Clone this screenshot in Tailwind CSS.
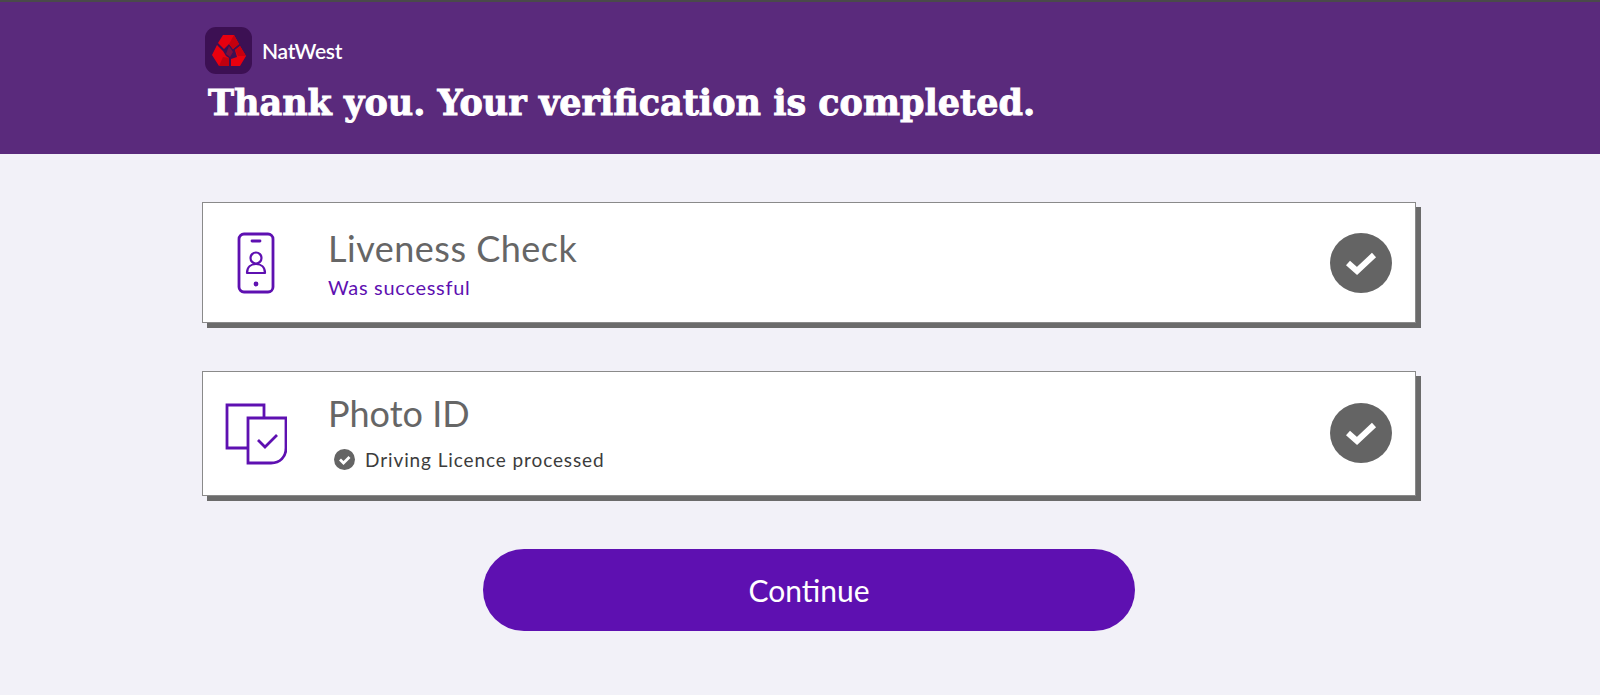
<!DOCTYPE html>
<html lang="en">
  <head>
    <meta charset="UTF-8">
    <meta name="viewport" content="width=device-width, initial-scale=1.0">
    <title>NatWest - Verification completed</title>
    <script src="https://cdn.jsdelivr.net/npm/@tailwindcss/browser@4"></script>
  </head>
  <body class="h-[695px] overflow-hidden bg-[#f2f1f8] font-['Lato','Open_Sans',sans-serif]">

    <header class="h-[154px] bg-[#5a2a7c] border-t-2 border-[#4a4a4a] pl-[205px] pt-[25px]">
      <div class="flex items-center">
        <div class="w-[47px] h-[47px] rounded-[11px] bg-[#3c1053] flex items-center justify-center">
          <svg class="w-[34px] h-[32px]" viewBox="0 0 34 32">
            <polygon points="11,0 22,0 27,9 21,14 17,9 12,14 6,8" fill="#e8000f"/>
            <polygon points="22,0 27,9 21,14 17,9" fill="#c4000f"/>
            <polygon points="5,10 11,16 14,21 17,23 17,31 7,31 0,20" fill="#e8000f"/>
            <polygon points="7,31 17,31 17,23 11,22" fill="#c00010"/>
            <polygon points="23,15 28,11 34,21 28,31 19,31 19,24 25,22" fill="#e8000f"/>
            <polygon points="23,15 28,11 34,21 26,21" fill="#c8000f"/>
            <polygon points="17,11 21,17 18,22 14,19" fill="#7a1040"/>
          </svg>
        </div>
        <span class="ml-[10px] text-[21px] leading-none font-semibold text-white tracking-[-0.3px]">NatWest</span>
      </div>
      <h1 class="ml-[3px] mt-[7px] font-['DejaVu_Serif',serif] font-bold text-[35px] leading-[44px] text-white whitespace-nowrap [-webkit-text-stroke:0.9px_white]">Thank you. Your verification is completed.</h1>
    </header>

    <main class="pl-[202px] pt-[48px]">
      <section class="w-[1214px] h-[121px] bg-white border border-[#8a8a8a] shadow-[5px_5px_0_#6b6b6b] flex items-center">
        <div class="w-[125px] pr-[20px] flex justify-center">
          <svg class="w-[38px] h-[62px] text-[#5e10b1]" viewBox="0 0 38 62" fill="none" stroke="currentColor" stroke-width="2.8">
            <rect x="2" y="2" width="34" height="58" rx="5"/>
            <path d="M15 9h8" stroke-linecap="round"/>
            <circle cx="19" cy="26" r="5.5" stroke-width="2.2"/>
            <path d="M10 41c0-6 4-9 9-9s9 3 9 9z" stroke-linejoin="round" stroke-width="2.2"/>
            <circle cx="19" cy="52" r="1" fill="currentColor"/>
          </svg>
        </div>
        <div class="flex-1">
          <h2 class="text-[36px] leading-[44px] text-[#666666] tracking-[0.5px]">Liveness Check</h2>
          <p class="mt-[4px] text-[20px] leading-[26px] text-[#5e10b1] tracking-[0.7px]">Was successful</p>
        </div>
        <svg class="w-[62px] h-[60px] mr-[23px]" viewBox="0 0 62 60">
          <ellipse cx="31" cy="30" rx="31" ry="30" fill="#646464"/>
          <path d="M18 30l9 8 17-16" fill="none" stroke="#fff" stroke-width="6"/>
        </svg>
      </section>

      <section class="mt-[48px] w-[1214px] h-[125px] bg-white border border-[#8a8a8a] shadow-[5px_5px_0_#6b6b6b] flex items-center">
        <div class="w-[125px] pr-[20px] flex justify-center">
          <svg class="w-[62px] h-[62px] text-[#5e10b1]" viewBox="0 0 62 62" fill="none" stroke="currentColor" stroke-width="2.8">
            <path d="M23 45H2V2h37v14"/>
            <path d="M23 15h38v30c0 9-6 15-15 15H23z"/>
            <path d="M33 37l7 7 12-12"/>
          </svg>
        </div>
        <div class="flex-1 pb-[2px]">
          <h2 class="text-[36px] leading-[44px] text-[#666666] -mt-[2px]">Photo ID</h2>
          <p class="mt-[12px] ml-[6px] flex items-center gap-[10px] text-[19px] leading-[26px] text-[#3c3c3c] tracking-[0.9px]">
            <svg class="w-[21px] h-[21px]" viewBox="0 0 21 21">
              <circle cx="10.5" cy="10.5" r="10.5" fill="#646464"/>
              <path d="M6 10.5l3.5 3.5 6-6" fill="none" stroke="#fff" stroke-width="2.8"/>
            </svg>
            Driving Licence processed
          </p>
        </div>
        <svg class="w-[62px] h-[60px] mr-[23px] mb-[2px]" viewBox="0 0 62 60">
          <ellipse cx="31" cy="30" rx="31" ry="30" fill="#646464"/>
          <path d="M18 30l9 8 17-16" fill="none" stroke="#fff" stroke-width="6"/>
        </svg>
      </section>

      <button class="block mt-[53px] ml-[281px] w-[652px] h-[82px] rounded-[41px] bg-[#5e10b1] text-white text-[30px]">Continue</button>
    </main>
  </body>
</html>
